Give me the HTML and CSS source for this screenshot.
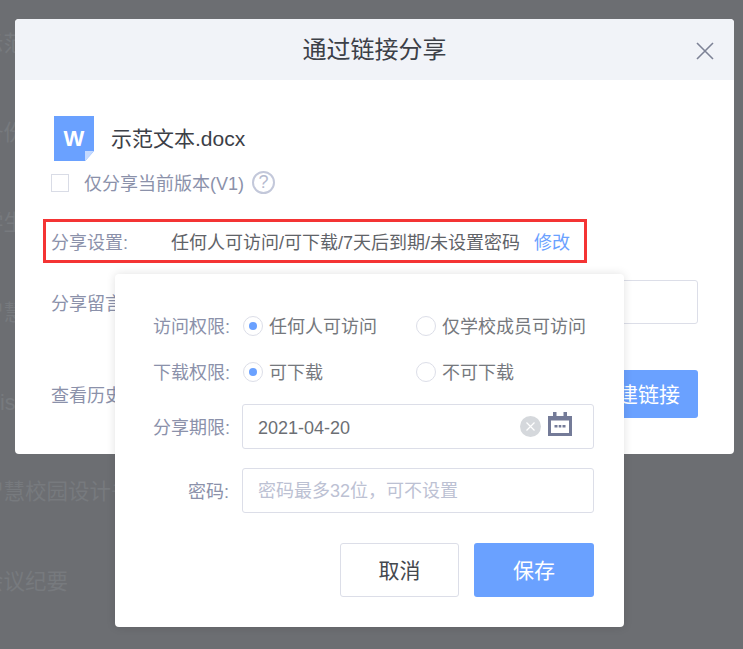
FILE: index.html
```html
<!DOCTYPE html>
<html lang="zh">
<head>
  <meta charset="UTF-8" />
  <title>通过链接分享</title>
  <link rel="stylesheet" href="styles.css">
</head>
<body>
  <div class="file-list">
    <div class="file-row">示范文本</div>
    <div class="file-row">备份资料</div>
    <div class="file-row">学生名单</div>
    <div class="file-row">智慧校园</div>
    <div class="file-row">this</div>
    <div class="file-row">智慧校园设计书</div>
    <div class="file-row">会议纪要</div>
  </div>

  <div class="dialog">
    <div class="dialog-header">
      <h1>通过链接分享</h1>
      <svg class="close" width="18" height="18" viewBox="0 0 18 18">
        <path d="M1 1 L17 17 M17 1 L1 17" stroke="#7d8296" stroke-width="1.6" fill="none" />
      </svg>
    </div>
    <div class="dialog-body">
      <div class="file-info">
        <div class="file-icon">W<span class="file-fold"></span></div>
        <span class="file-name">示范文本.docx</span>
      </div>
      <div class="version-row">
        <span class="checkbox"></span>
        <span>仅分享当前版本(V1)</span>
        <span class="help">?</span>
      </div>
      <div class="settings-row">
        <span class="settings-label">分享设置:</span>
        <span class="settings-value">任何人可访问/可下载/7天后到期/未设置密码</span>
        <a class="settings-link">修改</a>
      </div>
      <div class="message-row">
        <span class="settings-label">分享留言:</span>
        <div class="message-input"></div>
      </div>
      <div class="footer-row">
        <span class="settings-label">查看历史链接</span>
        <button class="btn-primary btn-create">创建链接</button>
      </div>
    </div>
  </div>

  <div class="popover">
    <div class="form-row radio-row">
      <label class="form-label">访问权限:</label>
      <div class="radio-option"><span class="radio checked"></span><span class="radio-text">任何人可访问</span></div>
      <div class="radio-option"><span class="radio"></span><span class="radio-text">仅学校成员可访问</span></div>
    </div>
    <div class="form-row radio-row second">
      <label class="form-label">下载权限:</label>
      <div class="radio-option"><span class="radio checked"></span><span class="radio-text">可下载</span></div>
      <div class="radio-option"><span class="radio"></span><span class="radio-text">不可下载</span></div>
    </div>
    <div class="form-row date-row">
      <label class="form-label">分享期限:</label>
      <div class="field">
        <span class="field-text">2021-04-20</span>
        <svg class="clear-icon" width="21" height="21" viewBox="0 0 21 21">
          <circle cx="10.5" cy="10.5" r="10.5" fill="#d5d8dc" />
          <path d="M6.5 6.5 L14.5 14.5 M14.5 6.5 L6.5 14.5" stroke="#fff" stroke-width="1.2" />
        </svg>
        <svg class="date-icon" width="24" height="24" viewBox="0 0 24 24">
          <path d="M1.5 5.5 H22.5 V22.5 H1.5 Z" fill="none" stroke="#747b98" stroke-width="3" />
          <path d="M5 0 H8.5 V6 H5 Z M15.5 0 H19 V6 H15.5 Z M0 4 H24 V8.5 H0 Z" fill="#747b98" />
          <path d="M6.5 13 H9.5 V15.5 H6.5 Z M10.7 13 H13.3 V15.5 H10.7 Z M14.5 13 H17.5 V15.5 H14.5 Z" fill="#747b98" />
        </svg>
      </div>
    </div>
    <div class="form-row password-row">
      <label class="form-label">密码:</label>
      <div class="field"><span class="placeholder">密码最多32位，可不设置</span></div>
    </div>
    <div class="popover-actions">
      <button class="btn-cancel">取消</button>
      <button class="btn-primary btn-save">保存</button>
    </div>
  </div>
</body>
</html>
```

FILE: styles.css
```css
* {
  box-sizing: border-box;
}
html, body {
  height: 100%;
}
body {
  margin: 0;
  overflow: hidden;
  position: relative;
  background: #6c6e72;
  font-family: "Liberation Sans", "Noto Sans CJK SC", sans-serif;
  font-size: 18px;
  color: #5f6368;
}
.file-list {
  padding-top: 21.5px;
  margin-left: -18px;
}
.file-row {
  height: 89.8px;
  line-height: 44px;
  font-size: 21.5px;
  color: #777a7e;
  white-space: nowrap;
}

.dialog {
  position: absolute;
  left: 15px;
  top: 19px;
  width: 719px;
  height: 435px;
  background: #fff;
  border-radius: 4px;
  overflow: hidden;
}
.dialog-header {
  height: 61px;
  padding-bottom: 5px;
  background: #f1f3f8;
  display: flex;
  align-items: center;
  justify-content: center;
  position: relative;
}
.dialog-header h1 {
  margin: 0;
  font-size: 24px;
  font-weight: 400;
  color: #3c4047;
}
.close {
  position: absolute;
  right: 20px;
  top: 23px;
}
.dialog-body {
  padding: 36px 36px 0;
}
.file-info {
  display: flex;
  align-items: center;
  gap: 17px;
  margin-left: 3px;
}
.file-icon {
  width: 40px;
  height: 45px;
  background: #6aa1ff;
  color: #fff;
  font-size: 22px;
  font-weight: 700;
  display: flex;
  align-items: center;
  justify-content: center;
  position: relative;
  clip-path: polygon(0 0, 100% 0, 100% 78%, 78% 100%, 0 100%);
}
.file-fold {
  position: absolute;
  right: 0;
  bottom: 0;
  width: 9px;
  height: 10px;
  background: #c4d9ff;
}
.file-name {
  font-size: 21px;
  color: #3c4047;
  margin-top: -4px;
}
.version-row {
  display: flex;
  align-items: center;
  margin-top: 9px;
  height: 24px;
  color: #8b91aa;
}
.checkbox {
  width: 18px;
  height: 18px;
  margin-top: 2px;
  border: 1px solid #d9dce6;
  margin-right: 15px;
}
.help {
  width: 23px;
  height: 23px;
  margin-left: 8px;
  margin-top: 1px;
  border: 2px solid #c3c8da;
  border-radius: 50%;
  color: #b5bacf;
  font-size: 18px;
  line-height: 19px;
  text-align: center;
}
.settings-row {
  display: flex;
  align-items: center;
  height: 44px;
  width: 544px;
  margin: 25px 0 0 -8px;
  border: 3px solid #f43434;
  padding-left: 5px;
}
.settings-label {
  color: #8b91aa;
}
.settings-value {
  margin-left: 43px;
  color: #5f6368;
  white-space: nowrap;
}
.settings-link {
  margin-left: 14px;
  color: #6aa1ff;
}
.message-row {
  display: flex;
  align-items: center;
  justify-content: space-between;
  margin-top: 17px;
  height: 44px;
}
.message-input {
  width: 420px;
  height: 44px;
  border: 1px solid #dcdee8;
  border-radius: 3px;
}
.footer-row {
  display: flex;
  align-items: center;
  justify-content: space-between;
  margin-top: 46px;
}
button {
  font-family: inherit;
  font-size: 21px;
  padding: 0 0 2px;
  border-radius: 3px;
  cursor: pointer;
}
.btn-primary {
  background: #6aa1ff;
  border: none;
  color: #fff;
}
.btn-create {
  width: 120px;
  height: 48px;
}

.popover {
  position: absolute;
  left: 115px;
  top: 274px;
  width: 509px;
  height: 353px;
  padding: 40px 30px 0 38px;
  background: #fff;
  border-radius: 4px;
  box-shadow: 0 0 10px rgba(0, 0, 0, 0.12);
}
.form-row {
  display: flex;
  align-items: center;
}
.form-label {
  width: 76px;
  margin-right: 13px;
  margin-top: -2px;
  flex-shrink: 0;
  text-align: right;
  color: #8b91aa;
  white-space: nowrap;
}
.radio-row {
  height: 24px;
}
.radio-row.second {
  margin-top: 22px;
}
.radio-option {
  width: 173px;
  display: flex;
  align-items: center;
  white-space: nowrap;
  color: #75787d;
}
.radio-text {
  margin-top: -2px;
}
.radio {
  width: 20px;
  height: 20px;
  margin-right: 6px;
  margin-left: 1px;
  border: 1px solid #dcdee8;
  border-radius: 50%;
  display: flex;
  align-items: center;
  justify-content: center;
}
.radio.checked::after {
  content: "";
  width: 8px;
  height: 8px;
  border-radius: 50%;
  background: #6aa1ff;
}
.date-row {
  margin-top: 20px;
}
.password-row {
  margin-top: 19px;
}
.field {
  width: 352px;
  height: 45px;
  padding: 0 21px 0 15px;
  border: 1px solid #dcdee8;
  border-radius: 3px;
  display: flex;
  align-items: center;
}
.field-text {
  flex: 1;
  padding-top: 3px;
  color: #6c6f74;
}
.clear-icon {
  margin-right: 7px;
}
.date-icon {
  margin-top: -5px;
}
.placeholder {
  margin-top: -4px;
  color: #bcc1d3;
}
.popover-actions {
  display: flex;
  justify-content: flex-end;
  gap: 15px;
  margin-top: 30px;
}
.btn-cancel {
  width: 119px;
  height: 54px;
  background: #fff;
  border: 1px solid #dcdee8;
  color: #44484e;
}
.btn-save {
  width: 120px;
  height: 54px;
}
```
